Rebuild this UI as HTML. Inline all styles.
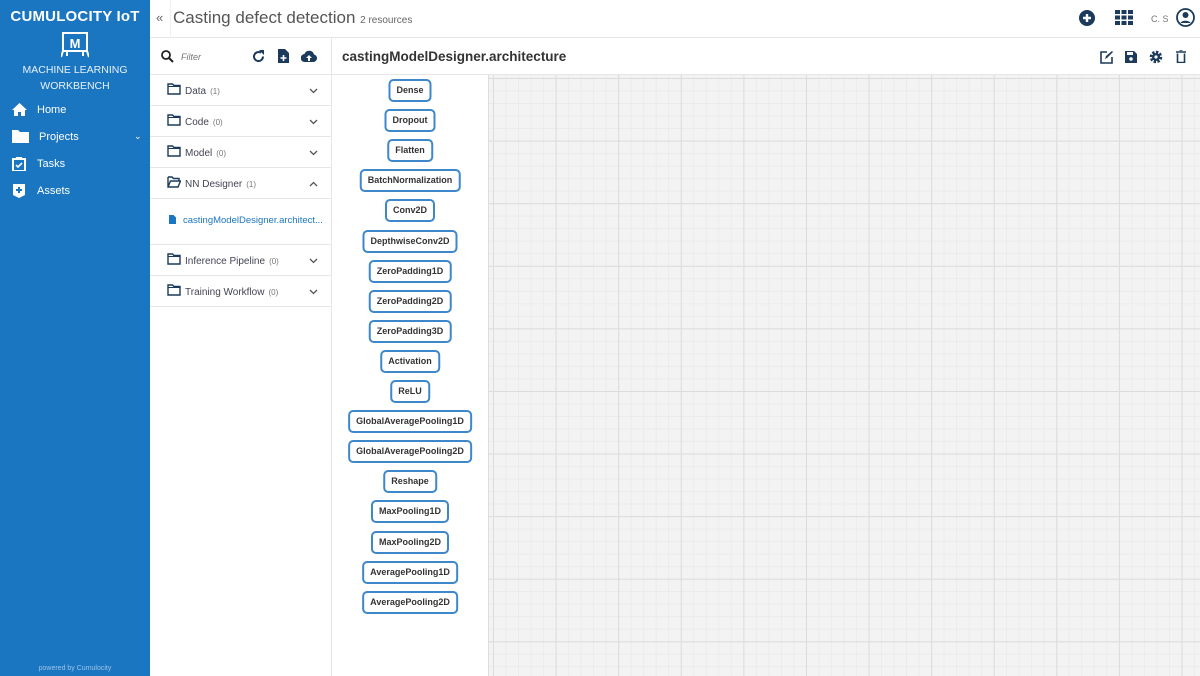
<!DOCTYPE html>
<html><head><meta charset="utf-8"><style>
*{box-sizing:border-box;margin:0;padding:0}
body{width:1200px;height:676px;overflow:hidden;font-family:"Liberation Sans",sans-serif;background:#fff;position:relative;color:#333}
.sb{position:absolute;left:0;top:0;width:150px;height:676px;background:#1a76c1;color:#fff}
.brand{position:absolute;left:0;top:8px;width:150px;text-align:center;font-weight:bold;font-size:15px;letter-spacing:.2px}
.mlw{position:absolute;top:62px;width:150px;text-align:center;font-size:10.5px;line-height:16px;color:#e8f1fa}
.nav{position:absolute;left:12px;font-size:11px;display:flex;align-items:center}
.nav svg{margin-right:10px}
.pw{position:absolute;bottom:4px;width:150px;text-align:center;font-size:7px;color:#9cc3e6}
.top{position:absolute;left:150px;top:0;right:0;height:38px;border-bottom:1px solid #e6e6e6}
.ttl{position:absolute;left:173px;top:8px;font-size:17px;color:#555}
.ttl small{font-size:10px;color:#666}
.left{position:absolute;left:150px;top:38px;width:182px;bottom:0;border-right:1px solid #e6e6e6}
.row{position:absolute;left:0;width:181px;border-bottom:1px solid #e6e6e6;font-size:10px;color:#445}
.row .f{position:absolute;left:17px;top:8px}
.row .t{position:absolute;left:35px;top:11px}
.row .t small{font-size:8px;color:#777;margin-left:4px}
.row .c{position:absolute;left:159px;top:13px}
.hdr{position:absolute;left:332px;top:38px;right:0;height:37px;border-bottom:1px solid #e6e6e6}
.hdr .n{position:absolute;left:10px;top:11px;font-size:13.5px;font-weight:bold;color:#333}
.pal{position:absolute;left:332px;top:75px;width:156px;bottom:0}
.btn{position:absolute;height:23px;border:2px solid #3d87ca;border-radius:5px;font-size:9px;font-weight:bold;line-height:19px;text-align:center;padding:0 6px;transform:translateX(-50%);left:78px;background:#fff;white-space:nowrap;color:#333}
.grid{position:absolute;left:488px;top:75px;right:0;bottom:0;border-left:1px solid #ddd;background-color:#f3f3f3;
background-image:linear-gradient(#dcdcdc 1px,transparent 1px),linear-gradient(90deg,#dcdcdc 1px,transparent 1px),linear-gradient(#ebebeb 1px,transparent 1px),linear-gradient(90deg,#ebebeb 1px,transparent 1px);
background-size:62.6px 62.6px,62.6px 62.6px,12.52px 12.52px,12.52px 12.52px;background-position:4px 3px,4px 3px,4px 3px,4px 3px}
</style></head><body>
<div class="sb">
<div class="brand">CUMULOCITY IoT</div>
<svg style="position:absolute;left:61px;top:32px" width="28" height="26" viewBox="0 0 28 26"><rect x="2" y="1" width="24" height="18" fill="none" stroke="#fff" stroke-width="2"/><path d="M2 19 L0 25 M26 19 L28 25 M6 19v5M22 19v5" stroke="#fff" stroke-width="2"/><text x="14" y="16" font-size="13" font-weight="bold" fill="#fff" text-anchor="middle" font-family="Liberation Sans">M</text></svg>
<div class="mlw">MACHINE LEARNING<br>WORKBENCH</div>
<div class="nav" style="top:103px"><svg width="15" height="13" viewBox="0 0 15 13"><path d="M7.5 0L0 7h2v6h4V9h3v4h4V7h2z" fill="#fff"/></svg>Home</div>
<div class="nav" style="top:130px"><svg width="17" height="13" viewBox="0 0 17 13"><path d="M0 0h6l2 2h9v11H0z" fill="#fff"/></svg>Projects<span style="position:absolute;left:122px;font-size:9px">&#8964;</span></div>
<div class="nav" style="top:157px"><svg width="15" height="14" viewBox="0 0 15 14"><rect x="1" y="2" width="12" height="12" fill="none" stroke="#fff" stroke-width="2"/><path d="M4 8l2 2 4-4" stroke="#fff" fill="none" stroke-width="1.6"/><rect x="4" y="0" width="6" height="3" fill="#fff"/></svg>Tasks</div>
<div class="nav" style="top:184px"><svg width="15" height="14" viewBox="0 0 15 14"><path d="M1 0h12v11l-6 3-6-3z" fill="#fff"/><path d="M7 3v6M4 6h6" stroke="#1a76c1" stroke-width="2"/></svg>Assets</div>
<div class="pw">powered by Cumulocity</div>
</div>
<div class="top">
<div style="position:absolute;left:6px;top:10px;font-size:13px;color:#666">&laquo;</div>
<div style="position:absolute;left:20px;top:0;height:38px;border-left:1px solid #eee"></div>
<svg style="position:absolute;left:929px;top:10px" width="16" height="16" viewBox="0 0 16 16"><circle cx="8" cy="8" r="8" fill="#1b3a5c"/><path d="M8 4v8M4 8h8" stroke="#fff" stroke-width="2.4"/></svg>
<svg style="position:absolute;left:965px;top:10px" width="18" height="15" viewBox="0 0 18 15"><g fill="#1b3a5c"><rect x="0" y="0" width="5" height="4"/><rect x="6.5" y="0" width="5" height="4"/><rect x="13" y="0" width="5" height="4"/><rect x="0" y="5.5" width="5" height="4"/><rect x="6.5" y="5.5" width="5" height="4"/><rect x="13" y="5.5" width="5" height="4"/><rect x="0" y="11" width="5" height="4"/><rect x="6.5" y="11" width="5" height="4"/><rect x="13" y="11" width="5" height="4"/></g></svg>
<div style="position:absolute;left:1001px;top:14px;font-size:9px;color:#777">C. S</div>
<svg style="position:absolute;left:1026px;top:8px" width="19" height="19" viewBox="0 0 19 19"><circle cx="9.5" cy="9.5" r="8.5" fill="none" stroke="#1b3a5c" stroke-width="1.8"/><circle cx="9.5" cy="7" r="3" fill="#1b3a5c"/><path d="M4.5 15c1-3 9-3 10 0z" fill="#1b3a5c"/></svg>
</div>
<div class="ttl">Casting defect detection <small>2 resources</small></div>
<div class="left">
<svg style="position:absolute;left:11px;top:12px" width="13" height="13" viewBox="0 0 13 13"><circle cx="5" cy="5" r="4" fill="none" stroke="#222" stroke-width="1.8"/><path d="M8 8l4 4" stroke="#222" stroke-width="2"/></svg>
<div style="position:absolute;left:31px;top:14px;font-size:9px;font-style:italic;color:#777">Filter</div>
<svg style="position:absolute;left:102px;top:12px" width="13" height="13" viewBox="0 0 13 13"><path d="M11 6.5A4.5 4.5 0 1 1 9 2.8" fill="none" stroke="#1b3a5c" stroke-width="2"/><path d="M7 0h5v5z" fill="#1b3a5c"/></svg>
<svg style="position:absolute;left:128px;top:11px" width="11" height="14" viewBox="0 0 11 14"><path d="M0 0h7l4 4v10H0z" fill="#1b3a5c"/><path d="M5.5 6v6M2.5 9h6" stroke="#fff" stroke-width="1.6"/></svg>
<svg style="position:absolute;left:151px;top:12px" width="16" height="12" viewBox="0 0 16 12"><path d="M4 12a4 4 0 0 1-.5-8A5 5 0 0 1 13 4.5a3.8 3.8 0 0 1-.5 7.5z" fill="#1b3a5c"/><path d="M8 5l-3 3h2v3h2V8h2z" fill="#fff"/></svg>
</div>
<div style="position:absolute;left:150px;top:74px;width:182px;border-top:1px solid #e6e6e6"></div>
<div id="rows"></div>
<div class="hdr"><div class="n">castingModelDesigner.architecture</div>
<svg style="position:absolute;left:768px;top:13px" width="13" height="13" viewBox="0 0 13 13"><path d="M7 1H1v11h11V6" fill="none" stroke="#1b3a5c" stroke-width="1.6"/><path d="M5 8l1-3 6-5 1 1-6 6z" fill="#1b3a5c"/></svg>
<svg style="position:absolute;left:793px;top:13px" width="12" height="12" viewBox="0 0 12 12"><path d="M0 0h9l3 3v9H0z" fill="#1b3a5c"/><rect x="2" y="1" width="6" height="3" fill="#fff"/><circle cx="6" cy="8" r="1.8" fill="#fff"/></svg>
<svg style="position:absolute;left:817px;top:12px" width="14" height="14" viewBox="0 0 14 14"><circle cx="7" cy="7" r="4.5" fill="none" stroke="#1b3a5c" stroke-width="3.5" stroke-dasharray="2.2 1.3"/><circle cx="7" cy="7" r="4" fill="#1b3a5c"/><circle cx="7" cy="7" r="1.6" fill="#fff"/></svg>
<svg style="position:absolute;left:844px;top:12px" width="10" height="13" viewBox="0 0 10 13"><path d="M0 2h10M3.5 0h3" stroke="#1b3a5c" stroke-width="1.6"/><path d="M1.5 3.5v9h7v-9" fill="none" stroke="#1b3a5c" stroke-width="1.6"/></svg>
</div>
<div class="pal" id="pal"></div>
<div class="grid"></div>
<script>
var rows=[["Data","1",75,"d"],["Code","0",106,"d"],["Model","0",137,"d"],["NN Designer","1",168,"u"]];
var h="";
function fold(open){return open?'<svg class="f" width="14" height="12" viewBox="0 0 14 12"><path d="M1 1h4l1.5 1.5H12v2" fill="none" stroke="#1b3a5c" stroke-width="1.4"/><path d="M1 1v10h10l2.5-6H3.5L1 11" fill="none" stroke="#1b3a5c" stroke-width="1.4"/></svg>':'<svg class="f" width="14" height="12" viewBox="0 0 14 12"><path d="M1 1h4.5l1.5 1.5H13V11H1z" fill="none" stroke="#1b3a5c" stroke-width="1.4"/><path d="M1 3.5h12" stroke="#1b3a5c" stroke-width="1"/></svg>'}
function row(t,n,y,c,hh){return '<div class="row" style="left:150px;top:'+y+'px;height:'+(hh||31)+'px">'+fold(c=="u")+'<div class="t">'+t+'<small>('+n+')</small></div><svg class="c" width="9" height="6" viewBox="0 0 9 6"><path d="'+(c=="u"?"M1 5l3.5-3.5L8 5":"M1 1l3.5 3.5L8 1")+'" fill="none" stroke="#555" stroke-width="1.3"/></svg></div>'}
rows.forEach(function(r){h+=row(r[0],r[1],r[2],r[3])});
h+='<div class="row" style="left:150px;top:199px;height:46px"><svg style="position:absolute;left:19px;top:16px" width="7" height="9" viewBox="0 0 7 9"><path d="M0 0h4.5L7 2.5V9H0z" fill="#1a76c1"/></svg><div style="position:absolute;left:33px;top:16px;font-size:9.5px;color:#1a76c1">castingModelDesigner.architect...</div></div>';
h+=row("Inference Pipeline","0",245,"d")+row("Training Workflow","0",276,"d");
document.getElementById("rows").outerHTML=h;
var L=["Dense","Dropout","Flatten","BatchNormalization","Conv2D","DepthwiseConv2D","ZeroPadding1D","ZeroPadding2D","ZeroPadding3D","Activation","ReLU","GlobalAveragePooling1D","GlobalAveragePooling2D","Reshape","MaxPooling1D","MaxPooling2D","AveragePooling1D","AveragePooling2D"];
var p="";L.forEach(function(l,i){p+='<div class="btn" style="top:'+(4+i*30.1)+'px">'+l+'</div>'});
document.getElementById("pal").innerHTML=p;
</script>
</body></html>
